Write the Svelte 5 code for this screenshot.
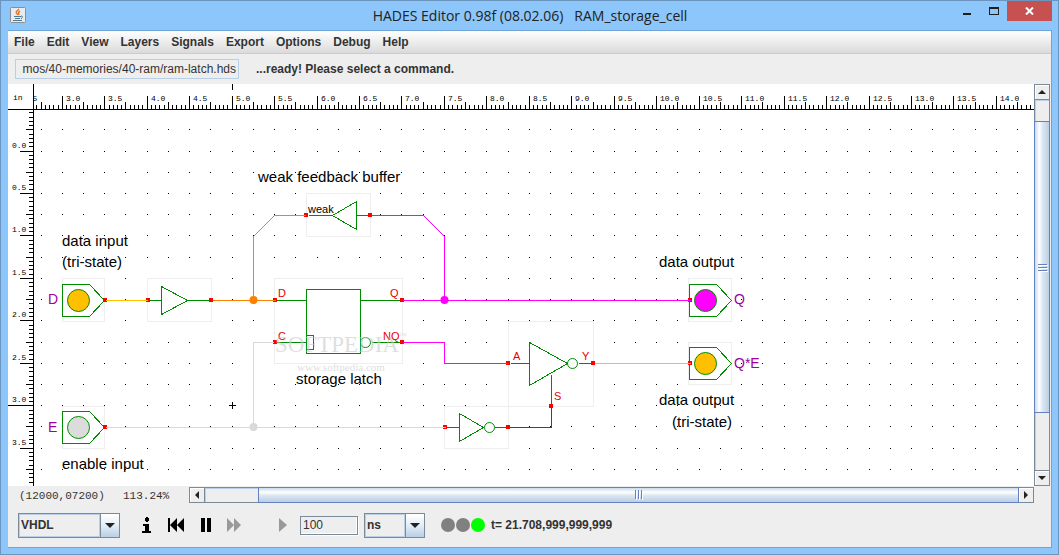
<script>
  const menus = ['File', 'Edit', 'View', 'Layers', 'Signals', 'Export', 'Options', 'Debug', 'Help'];

  // canvas geometry: one inch on the drawing, and where 3.0 / 0.0 land
  const INCH = 84.92;
  const X3 = 54.3;
  const Y0 = 67;
  const COLS = 100;
  const ROWS = 60;

  const xAt = (v) => Math.floor(X3 + (v - 3) * INCH);
  const yAt = (v) => Math.floor(Y0 + v * INCH);
  const range = (n) => Array.from({ length: n }, (_, i) => i);

  const dotPath = range(COLS)
    .map((c) => range(ROWS).map((r) => `M${xAt(2.75 + c / 4)} ${yAt(-0.25 + r / 4)}h1v1h-1z`).join(''))
    .join('');

  function tickSize(i) {
    if (i % 10 === 0) return 13;
    return i % 5 === 0 ? 7 : 4;
  }

  // ticks sit every 0.05 inch
  const topTicks = range(COLS * 5).map((i) => `M${xAt(2.7 + 0.05 * i)} 25v-${tickSize(i + 4)}h1v${tickSize(i + 4)}z`).join('');
  const sideTicks = range(ROWS * 5).map((i) => `M25 ${yAt(-0.45 + 0.05 * i)}h-${tickSize(i + 1)}v1h${tickSize(i + 1)}z`).join('');
  const topLabels = range(24).map((i) => 2.5 + i / 2);
  const sideLabels = range(8).map((i) => i / 2);

  const boxes = [
    [62, 278, 42, 43], [147, 278, 64, 43], [306, 193, 64, 43], [274, 278, 128, 85],
    [508, 321, 85, 85], [444, 406, 64, 42], [688, 278, 43, 43], [688, 342, 43, 42], [62, 406, 42, 42]
  ];

  const ports = [
    [105, 300], [148, 300], [211, 300], [275, 300], [402, 300], [690, 300],
    [306, 215], [370, 215], [275, 342], [402, 342], [508, 363], [593, 363],
    [551, 406], [445, 427], [508, 427], [690, 363], [105, 427]
  ];

  const wires = [
    { color: '#ffc000', d: 'M105 300H147M594 363H690' },
    { color: '#ff8000', d: 'M212 300H275M253 300V236L274 215H305' },
    { color: '#ff00ff', d: 'M371 215H423L444 236V300M402 300H690M402 342H444V363H508' },
    { color: '#d9d9d9', d: 'M273 342H253V427M105 427H445' },
    { color: '#e60000', d: 'M509 427H551V407' }
  ];

  const junctions = [
    { x: 253, y: 300, color: '#ff8000' },
    { x: 444, y: 300, color: '#ff00ff' },
    { x: 253, y: 427, color: '#d9d9d9' }
  ];

  const pads = [
    { x: 62, y: 300, color: '#ffc000' },
    { x: 62, y: 427, color: '#dcdcdc' },
    { x: 689, y: 300, color: '#ff00ff' },
    { x: 689, y: 363, color: '#ffc000' }
  ];

  const notes = [
    { x: 258, y: 182, text: 'weak feedback buffer' },
    { x: 62, y: 246, text: 'data input' },
    { x: 62, y: 267, text: '(tri-state)' },
    { x: 296, y: 384, text: 'storage latch' },
    { x: 659, y: 267, text: 'data output' },
    { x: 659, y: 405, text: 'data output' },
    { x: 672, y: 427, text: '(tri-state)' },
    { x: 62, y: 469, text: 'enable input' }
  ];

  const pins = [
    { x: 278, y: 297, text: 'D' },
    { x: 390, y: 297, text: 'Q' },
    { x: 278, y: 340, text: 'C' },
    { x: 383, y: 340, text: 'NQ' },
    { x: 513, y: 360, text: 'A' },
    { x: 582, y: 360, text: 'Y' },
    { x: 554, y: 400, text: 'S' }
  ];

  const names = [
    { x: 48, y: 304, text: 'D' },
    { x: 48, y: 432, text: 'E' },
    { x: 734, y: 304, text: 'Q' },
    { x: 734, y: 368, text: 'Q*E' }
  ];

  let file = $state('mos/40-memories/40-ram/ram-latch.hds');
  let language = $state('VHDL');
  let step = $state('100');
  let unit = $state('ns');
</script>

<div class="window">
  <header class="titlebar">
    <svg class="app-icon" width="16" height="16" viewBox="0 0 16 16" aria-hidden="true">
      <rect x="0.5" y="0.5" width="15" height="15" rx="1" fill="#e9ebec" stroke="#8b8f94" />
      <path d="M9 2C5 5 6 6 8 8M10 4C8 5 8 6 9 8" fill="none" stroke="#e8762c" stroke-width="1.4" />
      <path d="M4 9.500h7M5 11.500h5M3 13.500h9M11 9q3 0 0 3" fill="none" stroke="#4a7a96" />
    </svg>
    <h1>HADES Editor 0.98f (08.02.06) &nbsp; RAM_storage_cell</h1>
    <div class="controls">
      <button aria-label="Minimize">
        <svg width="10" height="10"><path d="M1 7h8v2H1z" fill="#1e1e1e" /></svg>
      </button>
      <button aria-label="Maximize">
        <svg width="10" height="10"><path d="M0 1h10v8H0zM1 3v5h8V3z" fill="#1e1e1e" fill-rule="evenodd" /></svg>
      </button>
      <button class="close" aria-label="Close">
        <svg width="9" height="8"><path d="M1 0.500L8 7.500M8 0.500L1 7.500" stroke="#fff" stroke-width="2" /></svg>
      </button>
    </div>
  </header>

  <main class="frame">
    <nav class="menubar">
      {#each menus as menu}
        <button>{menu}</button>
      {/each}
    </nav>

    <div class="toolbar">
      <input class="path" type="text" aria-label="Design file" bind:value={file} />
      <span class="message">...ready! Please select a command.</span>
    </div>

    <div class="workspace">
      <svg class="canvas" role="img" aria-label="RAM storage cell schematic">
        <rect width="100%" height="100%" fill="#fff" />
        <defs>
          <clipPath id="sheet"><rect x="26" y="0" width="100%" height="100%" /></clipPath>
        </defs>

        <g clip-path="url(#sheet)" shape-rendering="crispEdges">
          <path d={dotPath} />
          <path d={topTicks} />
          {#each topLabels as v}
            <text class="scale" x={xAt(v) + 4} y="17">{v.toFixed(1)}</text>
          {/each}
        </g>
        <g shape-rendering="crispEdges">
          <path d={sideTicks} />
          <rect x="0" y="25" width="100%" height="1" />
          <rect x="25" y="0" width="1" height="100%" />
          <rect x="224" y="0" width="1" height="6" />
          <rect x="0" y="321" width="12" height="1" />
          {#each sideLabels as v}
            <text class="scale" x="4" y={yAt(v) - 3}>{v.toFixed(1)}</text>
          {/each}
          <text class="scale" x="5" y="16">in</text>
        </g>

        <g transform="translate(-8 -84)">
          <g class="boxes">
            {#each boxes as [x, y, w, h]}
              <rect x={x + 0.5} y={y + 0.5} width={w} height={h} />
            {/each}
          </g>

          <g class="gates" transform="translate(0.5 0.5)">
            <!-- input buffer -->
            <path d="M149 300H161M161 286V314L187 300ZM187 300H210" />
            <!-- weak feedback buffer -->
            <path d="M308 215H332M356 201V229L332 215ZM356 215H369" />
            <!-- latch -->
            <path d="M306 289H360V353H306ZM275 300H306M275 342H306M360 300H401M371 342H401M306 335H313V349H306" />
            <circle cx="365" cy="342" r="5" />
            <!-- tri-state inverter -->
            <path d="M510 363H529M529 342V385L567 363ZM578 363H592M551 374V405" />
            <circle cx="572" cy="363" r="5" />
            <!-- enable inverter -->
            <path d="M446 427H459M459 413V441L483 427ZM494 427H507" />
            <circle cx="489" cy="427" r="5" />
            {#each pads as p}
              <path d="M{p.x} {p.y - 16}h27l15 16l-15 16h-27z" />
              <circle cx={p.x + 16} cy={p.y} r="11" fill={p.color} />
            {/each}
          </g>

          {#each ports as [x, y]}
            <rect x={x - 2} y={y - 2} width="4" height="4" fill="#f00" />
          {/each}

          <g class="wires" transform="translate(0.5 0.5)">
            {#each wires as w}
              <path d={w.d} stroke={w.color} />
            {/each}
          </g>
          {#each junctions as j}
            <circle cx={j.x + 0.5} cy={j.y} r="4" fill={j.color} />
          {/each}

          <path d="M229 405h7v1h-7zM232 402h1v7h-1z" />

          {#each notes as n}
            <text class="note" x={n.x} y={n.y}>{n.text}</text>
          {/each}
          {#each pins as p}
            <text class="pin" x={p.x} y={p.y}>{p.text}</text>
          {/each}
          {#each names as n}
            <text class="name" x={n.x} y={n.y}>{n.text}</text>
          {/each}
          <text class="small" x="308" y="213">weak</text>

          <text class="mark big" x="275" y="352">SOFTPEDIA</text>
          <text class="mark tm" x="399" y="338">™</text>
          <text class="mark url" x="297" y="371">www.softpedia.com</text>
        </g>
      </svg>

      <div class="scroll vertical">
        <button aria-label="Scroll up"><svg width="8" height="4"><path d="M0 4L4 0L8 4z" /></svg></button>
        <div class="track">
          <div class="thumb"><i></i><i></i><i></i></div>
        </div>
        <button aria-label="Scroll down"><svg width="8" height="4"><path d="M0 0L4 4L8 0z" /></svg></button>
      </div>
    </div>

    <div class="status">
      <span class="coords">(12000,07200)</span>
      <span class="zoom">113.24%</span>
      <div class="scroll horizontal">
        <button aria-label="Scroll left"><svg width="4" height="8"><path d="M4 0L0 4L4 8z" /></svg></button>
        <div class="track">
          <div class="thumb"><i></i><i></i><i></i></div>
        </div>
        <button aria-label="Scroll right"><svg width="4" height="8"><path d="M0 0L4 4L0 8z" /></svg></button>
      </div>
    </div>

    <footer class="simbar">
      <div class="combo language">
        <select aria-label="Language" bind:value={language}>
          <option>VHDL</option>
        </select>
        <span class="arrow"><svg width="10" height="5"><path d="M0 0h10L5 5z" /></svg></span>
      </div>

      <div class="transport">
        <button aria-label="Info">
          <svg width="10" height="16"><path d="M3 1h1V0h2v1h1v3H6v1H4V4H3zM1 7h6v7h2v2H0v-2h3V9H1z" /></svg>
        </button>
        <button aria-label="Rewind">
          <svg width="17" height="14"><path d="M0 0h2v14H0zM2 7L9 0v14zM9 7L16 0v14z" /></svg>
        </button>
        <button aria-label="Pause">
          <svg width="10" height="14"><path d="M0 0h4v14H0zM6 0h4v14H6z" /></svg>
        </button>
        <button aria-label="Fast forward" disabled>
          <svg width="14" height="14"><path d="M0 0L7 7L0 14zM7 0L14 7L7 14z" /></svg>
        </button>
        <button class="single" aria-label="Run for interval" disabled>
          <svg width="8" height="14"><path d="M0 0L8 7L0 14z" /></svg>
        </button>
      </div>

      <input class="step" type="text" aria-label="Interval" bind:value={step} />

      <div class="combo unit">
        <select aria-label="Time unit" bind:value={unit}>
          <option>ns</option>
        </select>
        <span class="arrow"><svg width="10" height="5"><path d="M0 0h10L5 5z" /></svg></span>
      </div>

      <div class="lamps">
        <span></span>
        <span></span>
        <span class="on"></span>
      </div>
      <span class="time">t= 21.708,999,999,999</span>
    </footer>
  </main>
</div>

<style>
  :global(body) {
    margin: 0;
  }

  .window {
    box-sizing: border-box;
    display: flex;
    flex-direction: column;
    height: 100vh;
    padding: 0 6px 6px 7px;
    border: 1px solid #6b95bd;
    background: #8cc6fa;
    color: #333;
    font: bold 12px/16px "Liberation Sans", Arial, sans-serif;
  }

  button {
    padding: 0;
    border: 0;
    background: none;
    color: inherit;
    font: inherit;
  }

  svg {
    display: block;
  }

  .titlebar {
    display: grid;
    grid-template-columns: 1fr auto 1fr;
    height: 29px;
  }

  .app-icon {
    margin: 6px 2px;
  }

  h1 {
    margin: 0;
    color: #222;
    font: 14px/29px "Open Sans", "Noto Sans", sans-serif;
    white-space: nowrap;
  }

  .controls {
    display: flex;
    justify-content: flex-end;
    height: 20px;
  }

  .controls button {
    display: flex;
    align-items: center;
    justify-content: center;
    width: 27px;
  }

  .controls .close {
    width: 45px;
    background: #c75050;
  }

  .frame {
    display: flex;
    flex: 1;
    flex-direction: column;
    min-height: 0;
    border: 1px solid #6ea4d8;
    border-left: 0;
    background: #eee;
  }

  .menubar {
    display: flex;
    height: 22px;
    padding-left: 6px;
    border-bottom: 1px solid #ccc;
    background: linear-gradient(#fff, #dadada);
  }

  .menubar button {
    padding-right: 12px;
  }

  .toolbar {
    display: flex;
    align-items: center;
    gap: 17px;
    height: 30px;
    padding-left: 7px;
  }

  input {
    box-sizing: border-box;
    margin: 0;
    padding: 0 2px;
    background: #eee;
    color: #333;
    font: 12px/16px "Liberation Sans", Arial, sans-serif;
    outline: none;
  }

  .path {
    width: 224px;
    height: 20px;
    border: 1px solid #b8cfe5;
    text-align: right;
  }

  .workspace {
    display: flex;
    flex: 1;
    min-height: 0;
  }

  .canvas {
    flex: 1;
    min-width: 0;
    height: 100%;
    overflow: hidden;
    font-weight: normal;
  }

  .scale {
    font: 8px "Liberation Mono", monospace;
  }

  .boxes rect {
    fill: #fff;
    stroke: #eee;
  }

  .gates path,
  .gates circle {
    stroke: #008c00;
  }

  .gates path,
  .gates > circle:not([fill]) {
    fill: none;
  }

  .gates path,
  .wires path {
    shape-rendering: crispEdges;
  }

  .wires path {
    fill: none;
  }

  .note {
    fill: #000;
    font-size: 15px;
  }

  .pin {
    fill: #e60000;
    font-size: 11px;
  }

  .name {
    fill: #a000a0;
    font-size: 14px;
  }

  .small {
    font-size: 11px;
  }

  .mark {
    fill: #c8c8c8;
    fill-opacity: 0.6;
    font-family: "Liberation Serif", serif;
  }

  .big {
    font-size: 23px;
  }

  .tm {
    font-size: 8px;
  }

  .url {
    font-size: 11px;
  }

  .scroll {
    display: flex;
    box-sizing: border-box;
    border: 1px solid #7a8a99;
    background: #eee;
  }

  .scroll button {
    display: flex;
    align-items: center;
    justify-content: center;
    flex: none;
    width: 14px;
    height: 14px;
    box-shadow: inset 1px 1px #fff;
  }

  .track {
    display: flex;
    flex: 1;
    box-shadow: inset 1px 1px #b8cfe5;
  }

  .thumb {
    display: flex;
    box-sizing: border-box;
    align-items: center;
    justify-content: center;
    gap: 1px;
    border: 1px solid #6382bf;
  }

  .thumb i {
    background: #6382bf;
  }

  .vertical {
    flex-direction: column;
    width: 16px;
    margin-right: 1px;
  }

  .vertical .track {
    flex-direction: column;
    border: solid #7a8a99;
    border-width: 1px 0;
  }

  .vertical .thumb {
    flex-direction: column;
    height: 79%;
    margin: 21px -1px 0;
    background: linear-gradient(90deg, #c8d9ec, #fff 30%, #dbe6f2 55%, #b8cfe5);
  }

  .vertical i {
    width: 9px;
    height: 1px;
    box-shadow: 1px 1px #fff;
  }

  .vertical .thumb,
  .horizontal .thumb {
    gap: 2px;
  }

  .status {
    display: flex;
    align-items: center;
    height: 17px;
    padding: 0 17px 0 11px;
    font: 11px/16px "Liberation Mono", monospace;
  }

  .coords {
    width: 104px;
    padding-top: 3px;
  }

  .zoom {
    width: 66px;
    padding-top: 3px;
  }

  .horizontal {
    flex: 1;
    height: 16px;
  }

  .horizontal .track {
    border: solid #7a8a99;
    border-width: 0 1px;
  }

  .horizontal .thumb {
    width: 100%;
    margin: -1px -1px -1px 53px;
    background: linear-gradient(#c8d9ec, #fff 30%, #dbe6f2 55%, #b8cfe5);
  }

  .horizontal i {
    width: 1px;
    height: 9px;
    box-shadow: 1px 1px #fff;
  }

  .simbar {
    display: flex;
    align-items: center;
    height: 44px;
    padding-left: 10px;
  }

  .combo {
    display: flex;
    box-sizing: border-box;
    height: 25px;
    border: 1px solid #7a8a99;
  }

  .combo select {
    flex: 1;
    min-width: 0;
    padding: 0 1px;
    border: 1px solid #b8cfe5;
    border-radius: 0;
    background: #eee;
    color: #333;
    font: inherit;
    appearance: none;
    outline: none;
  }

  .arrow {
    display: flex;
    align-items: center;
    justify-content: center;
    width: 18px;
    border-left: 1px solid #7a8a99;
    background: linear-gradient(#fff, #e4edf6 50%, #b8cfe5);
    pointer-events: none;
  }

  .arrow path,
  .scroll path {
    fill: #222;
  }

  .language {
    width: 102px;
  }

  .unit {
    width: 61px;
    margin-left: 6px;
  }

  .transport {
    display: flex;
    align-items: center;
    gap: 16px;
    margin-left: 22px;
  }

  .transport button:disabled {
    fill: #999;
  }

  .transport .single {
    margin-left: 22px;
  }

  .step {
    width: 58px;
    height: 19px;
    margin-left: 13px;
    border: 1px solid #7a8a99;
    box-shadow: inset -1px -1px #fff, 1px 1px #fff;
  }

  .lamps {
    display: flex;
    gap: 1px;
    margin-left: 16px;
  }

  .lamps span {
    width: 14px;
    height: 14px;
    border-radius: 50%;
    background: #808080;
  }

  .lamps .on {
    background: #0f0;
  }

  .time {
    margin-left: 6px;
  }
</style>
